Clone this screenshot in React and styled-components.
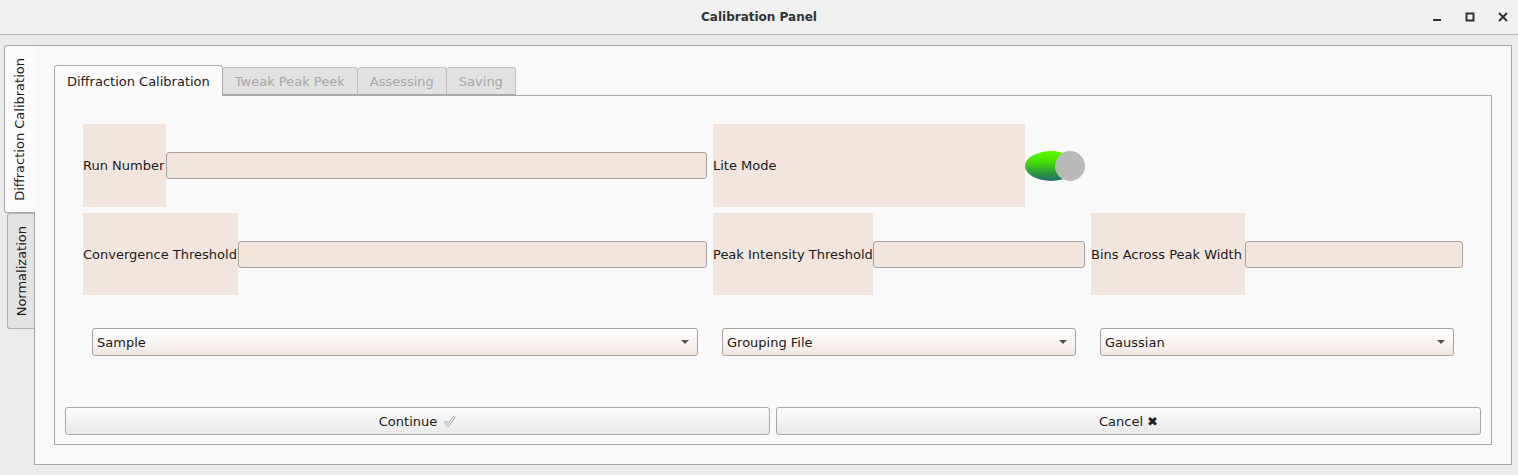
import React from "react";
import styled, { createGlobalStyle } from "styled-components";

const GlobalStyle = createGlobalStyle`
  html, body { margin: 0; padding: 0; }
  body {
    background: #ececec;
    font-family: "DejaVu Sans", "Liberation Sans", sans-serif;
    font-size: 13px;
    color: #1a1a1a;
  }
`;

const Window = styled.div`
  width: 1518px;
  height: 475px;
  display: flex;
  flex-direction: column;
  background: #ececec;
  overflow: hidden;
`;

const TitleBar = styled.div`
  height: 34px;
  flex: none;
  background: #f1f1f1;
  border-bottom: 1px solid #b4b4b4;
  display: flex;
  align-items: center;
  justify-content: center;
  position: relative;
`;

const Title = styled.div`
  font-weight: bold;
  font-size: 12px;
  color: #2e3436;
`;

const Controls = styled.div`
  position: absolute;
  right: 8px;
  top: 10px;
  display: flex;
  gap: 19px;
`;

const Ctl = styled.svg`
  width: 14px;
  height: 14px;
  display: block;
`;

const Body = styled.div`
  flex: 1;
  display: flex;
  padding: 10px 6px 10px 4px;
`;

const SideTabs = styled.div`
  width: 30px;
  flex: none;
  display: flex;
  flex-direction: column;
  align-items: flex-end;
`;

const SideTab = styled.div`
  width: ${(p) => (p.$active ? "31px" : "27px")};
  height: ${(p) => p.$h}px;
  margin-right: ${(p) => (p.$active ? "-1px" : "0")};
  box-sizing: border-box;
  background: ${(p) => (p.$active ? "#fbfbfb" : "#e3e3e3")};
  border: 1px solid ${(p) => (p.$active ? "#a9a9a9" : "#b3b3b3")};
  border-right: none;
  border-radius: 3px 0 0 3px;
  display: flex;
  align-items: center;
  justify-content: center;
  position: relative;
  z-index: ${(p) => (p.$active ? 2 : 0)};
`;

const SideLabel = styled.span`
  writing-mode: vertical-rl;
  transform: rotate(180deg);
  white-space: nowrap;
  color: #1a1a1a;
  margin-left: ${(p) => (p.$active ? "-2px" : "0")};
`;

const OuterPane = styled.div`
  flex: 1;
  box-sizing: border-box;
  background: #f9f9f9;
  border: 1px solid #a8a8a8;
  padding: 19px;
  display: flex;
  flex-direction: column;
`;

const TabBar = styled.div`
  display: flex;
  align-items: flex-end;
  height: 30px;
  flex: none;
`;

const Tab = styled.div`
  box-sizing: border-box;
  height: ${(p) => (p.$active ? "31px" : "28px")};
  margin-bottom: ${(p) => (p.$active ? "-1px" : "0")};
  padding: ${(p) => (p.$active ? "0" : "1px")} 12px 0 12px;
  display: flex;
  align-items: center;
  background: ${(p) => (p.$active ? "#fafafa" : "#e2e2e2")};
  border: 1px solid ${(p) => (p.$active ? "#a9a9a9" : "#bdbdbd")};
  border-bottom: ${(p) => (p.$active ? "none" : "1px solid #a9a9a9")};
  border-left: ${(p) => (p.$first || p.$active ? "" : "none")};
  border-radius: 3px 3px 0 0;
  color: ${(p) => (p.$active ? "#1a1a1a" : "#a7a7a7")};
  position: relative;
  z-index: ${(p) => (p.$active ? 2 : 0)};
  white-space: nowrap;
`;

const InnerPane = styled.div`
  flex: 1;
  box-sizing: border-box;
  background: #fafafa;
  border: 1px solid #a9a9a9;
  display: flex;
  flex-direction: column;
  padding: 28px 10px 9px 10px;
`;

const FormRow = styled.div`
  display: flex;
  align-items: center;
  height: ${(p) => p.$h}px;
  margin-left: 18px;
  margin-bottom: 6px;
`;

const Cell = styled.div`
  display: flex;
  align-items: center;
  height: 100%;
  margin-right: ${(p) => p.$gap || 0}px;
`;

const LabelBox = styled.div`
  width: ${(p) => p.$w}px;
  height: 100%;
  background: #f2e5dd;
  display: flex;
  align-items: center;
  white-space: nowrap;
  flex: none;
`;

const Input = styled.div`
  width: ${(p) => p.$w}px;
  height: 27px;
  box-sizing: border-box;
  background: #f2e5dd;
  border: 1px solid #a8a19c;
  border-radius: 3px;
  flex: none;
`;

const ToggleWrap = styled.div`
  width: 60px;
  height: 30px;
  position: relative;
  flex: none;
`;

const ToggleTrack = styled.div`
  position: absolute;
  left: 0;
  top: 0;
  width: 52px;
  height: 30px;
  border-radius: 50%;
  background: linear-gradient(180deg, #5cff00 0%, #46e000 35%, #2c9a3e 72%, #226f70 100%);
`;

const ToggleKnob = styled.div`
  position: absolute;
  right: 0;
  top: 0;
  width: 30px;
  height: 30px;
  border-radius: 50%;
  background: #b9b9b9;
`;

const SelectRow = styled.div`
  display: flex;
  gap: 24px;
  margin-left: 27px;
  margin-top: 27px;
`;

const Select = styled.div`
  width: ${(p) => p.$w}px;
  height: 28px;
  box-sizing: border-box;
  border: 1px solid #a8a09b;
  border-radius: 3px;
  background: linear-gradient(180deg, #fefefe 0%, #f7f2ef 60%, #f0e6e0 100%);
  display: flex;
  align-items: center;
  justify-content: space-between;
  padding: 0 8px 0 4px;
  flex: none;
`;

const Arrow = styled.span`
  width: 0;
  height: 0;
  border-left: 4px solid transparent;
  border-right: 4px solid transparent;
  border-top: 4px solid #555;
`;

const ButtonRow = styled.div`
  display: flex;
  gap: 6px;
  margin-top: auto;
`;

const Button = styled.div`
  flex: 1;
  height: 28px;
  box-sizing: border-box;
  border: 1px solid #a9a9a9;
  border-radius: 3px;
  background: linear-gradient(180deg, #fbfbfb 0%, #f1f1f1 60%, #e8e8e8 100%);
  display: flex;
  align-items: center;
  justify-content: center;
`;

const ButtonText = styled.span`
  display: inline-flex;
  align-items: center;
  gap: ${(p) => p.$gap}px;
  white-space: nowrap;
  color: #1a1a1a;
`;

const Mark = styled.span`
  font-weight: bold;
  color: #1a1a1a;
  font-size: 13px;
`;

const CheckIcon = styled.svg`
  width: 13px;
  height: 13px;
  display: block;
`;

export default function App() {
  return (
    <>
      <GlobalStyle />
      <Window>
        <TitleBar>
          <Title>Calibration Panel</Title>
          <Controls>
            <Ctl viewBox="0 0 14 14">
              <rect x="3" y="9" width="8" height="2" fill="#2e3436" />
            </Ctl>
            <Ctl viewBox="0 0 14 14">
              <rect x="3.5" y="3.5" width="7" height="7" fill="none" stroke="#2e3436" strokeWidth="2" />
            </Ctl>
            <Ctl viewBox="0 0 14 14">
              <path d="M3 3 L11 11 M11 3 L3 11" stroke="#2e3436" strokeWidth="2" />
            </Ctl>
          </Controls>
        </TitleBar>
        <Body>
          <SideTabs>
            <SideTab $active $h={168}>
              <SideLabel $active>Diffraction Calibration</SideLabel>
            </SideTab>
            <SideTab $h={116}>
              <SideLabel>Normalization</SideLabel>
            </SideTab>
          </SideTabs>
          <OuterPane>
            <TabBar>
              <Tab $active $first>Diffraction Calibration</Tab>
              <Tab>Tweak Peak Peek</Tab>
              <Tab>Assessing</Tab>
              <Tab>Saving</Tab>
            </TabBar>
            <InnerPane>
              <FormRow $h={83}>
                <LabelBox $w={83}>Run Number</LabelBox>
                <Cell $gap={6}>
                  <Input $w={541} />
                </Cell>
                <LabelBox $w={312}>Lite Mode</LabelBox>
                <ToggleWrap>
                  <ToggleTrack />
                  <ToggleKnob />
                </ToggleWrap>
              </FormRow>
              <FormRow $h={82}>
                <LabelBox $w={155}>Convergence Threshold</LabelBox>
                <Cell $gap={6}>
                  <Input $w={469} />
                </Cell>
                <LabelBox $w={160}>Peak Intensity Threshold</LabelBox>
                <Cell $gap={6}>
                  <Input $w={212} />
                </Cell>
                <LabelBox $w={154}>Bins Across Peak Width</LabelBox>
                <Input $w={218} />
              </FormRow>
              <SelectRow>
                <Select $w={606}>
                  <span>Sample</span>
                  <Arrow />
                </Select>
                <Select $w={354}>
                  <span>Grouping File</span>
                  <Arrow />
                </Select>
                <Select $w={354}>
                  <span>Gaussian</span>
                  <Arrow />
                </Select>
              </SelectRow>
              <ButtonRow>
                <Button>
                  <ButtonText $gap={6}>
                    Continue
                    <CheckIcon viewBox="0 0 14 14">
                      <path
                        d="M1.5 8 L3.5 6.5 L5.5 9 L11.5 1.5 L13 2.8 L5.6 12.5 Z"
                        fill="none"
                        stroke="#8a8a8a"
                        strokeWidth="0.9"
                        strokeLinejoin="round"
                      />
                    </CheckIcon>
                  </ButtonText>
                </Button>
                <Button>
                  <ButtonText $gap={4}>
                    Cancel <Mark>✖</Mark>
                  </ButtonText>
                </Button>
              </ButtonRow>
            </InnerPane>
          </OuterPane>
        </Body>
      </Window>
    </>
  );
}
